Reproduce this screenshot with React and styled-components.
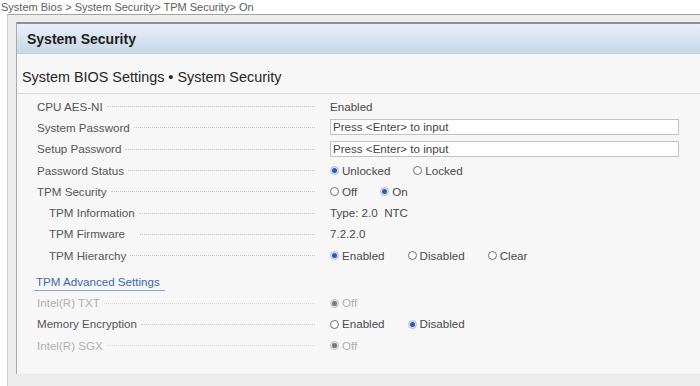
import React from 'react'
import styled, { createGlobalStyle } from 'styled-components'

const Global = createGlobalStyle`
  html, body {
    margin: 0;
    padding: 0;
    background: #fff;
    overflow: hidden;
  }
  body {
    font-family: "Liberation Sans", Arial, sans-serif;
  }
`

const Breadcrumb = styled.div`
  height: 14px;
  line-height: 14px;
  font-size: 11px;
  color: #5e5e5e;
  padding-left: 1px;
`

const Frame = styled.div`
  margin-left: 7px;
  border-top: 1px solid #a4a4a4;
  border-left: 1px solid #cfcfcf;
  background: #ececec;
  padding: 7px 0 13px 8px;
`

const Panel = styled.div`
  border-top: 2px solid #8e8e8e;
  border-left: 1px solid #a9a9a9;
  background: #f7f7f7;
  padding-bottom: 18px;
`

const Header = styled.div`
  height: 30px;
  line-height: 30px;
  padding-left: 10px;
  font-size: 14px;
  font-weight: bold;
  color: #1e1e1e;
  background: linear-gradient(#e9eff8, #c8d7e8);
  border-bottom: 1px solid #c2d0e0;
  box-sizing: border-box;
`

const Title = styled.div`
  padding: 14px 0 7px 5px;
  line-height: 18px;
  font-size: 14.4px;
  color: #262626;
  border-bottom: 1px solid #dcdcdc;
`

const Content = styled.div`
  padding-top: 1.5px;
`

const Row = styled.div`
  display: flex;
  align-items: center;
  height: 21.3px;
  font-size: 11.6px;
`

const LabelCell = styled.div`
  width: 293px;
  margin-left: 20px;
  padding-left: ${p => (p.$indent ? 12 : 0)}px;
  padding-right: 15px;
  box-sizing: border-box;
  display: flex;
  align-items: center;
  color: ${p => (p.$disabled ? '#b0b0b0' : '#555')};
`

const Label = styled.span`
  white-space: nowrap;
`

const Leader = styled.span`
  flex: 1;
  margin-left: ${p => (p.$gap ? 15 : 4)}px;
  border-bottom: 1px dotted ${p => (p.$disabled ? '#dcdcdc' : '#c8c8c8')};
  height: 0;
  margin-top: 1px;
`

const Value = styled.div`
  display: flex;
  align-items: center;
  gap: 23px;
  color: #4a4a4a;
  flex: 1;
  padding-right: 21px;
`

const TextBox = styled.div`
  flex: 1;
  height: 16px;
  line-height: 14px;
  border: 1px solid #c2c2c2;
  background: #fff;
  box-sizing: border-box;
  padding-left: 2px;
  color: #444;
`

const Option = styled.span`
  display: inline-flex;
  align-items: center;
  gap: 3px;
  color: ${p => (p.$disabled ? '#b0b0b0' : '#4a4a4a')};
`

const Dot = styled.span`
  position: relative;
  width: 9px;
  height: 9px;
  border-radius: 50%;
  box-sizing: border-box;
  margin-top: 1px;
  border: 1px solid ${p => (p.$checked ? (p.$disabled ? '#c4c4c4' : '#b3c0e2') : '#6e6e6e')};
  background: ${p => (p.$checked ? (p.$disabled ? '#dcdcdc' : '#dbe2f4') : '#fff')};
  &::after {
    content: '';
    display: ${p => (p.$checked ? 'block' : 'none')};
    position: absolute;
    left: 1px;
    top: 1px;
    width: 5px;
    height: 5px;
    border-radius: 50%;
    background: ${p => (p.$disabled ? '#7c7c7c' : '#3157bf')};
  }
`

const SubLink = styled.div`
  margin: 8px 0 1px 17px;
  display: inline-block;
  padding: 0 5px 0 2px;
  line-height: 16px;
  font-size: 11.6px;
  color: #3a69b5;
  border-bottom: 1px solid #8aa6d4;
`

const Radio = ({ label, checked, disabled }) => (
  <Option $disabled={disabled}>
    <Dot $checked={checked} $disabled={disabled} />
    {label}
  </Option>
)

const Setting = ({ label, indent, disabled, gap, children }) => (
  <Row>
    <LabelCell $indent={indent} $disabled={disabled}>
      <Label>{label}</Label>
      <Leader $gap={gap} $disabled={disabled} />
    </LabelCell>
    <Value>{children}</Value>
  </Row>
)

export default function App() {
  return (
    <>
      <Global />
      <Breadcrumb>System Bios &gt; System Security&gt; TPM Security&gt; On</Breadcrumb>
      <Frame>
        <Panel>
          <Header>System Security</Header>
          <Title>System BIOS Settings • System Security</Title>
          <Content>
            <Setting label="CPU AES-NI">Enabled</Setting>
            <Setting label="System Password">
              <TextBox>Press &lt;Enter&gt; to input</TextBox>
            </Setting>
            <Setting label="Setup Password">
              <TextBox>Press &lt;Enter&gt; to input</TextBox>
            </Setting>
            <Setting label="Password Status">
              <Radio label="Unlocked" checked />
              <Radio label="Locked" />
            </Setting>
            <Setting label="TPM Security">
              <Radio label="Off" />
              <Radio label="On" checked />
            </Setting>
            <Setting label="TPM Information" indent>Type: 2.0&nbsp; NTC</Setting>
            <Setting label="TPM Firmware" indent gap>7.2.2.0</Setting>
            <Setting label="TPM Hierarchy" indent>
              <Radio label="Enabled" checked />
              <Radio label="Disabled" />
              <Radio label="Clear" />
            </Setting>
            <SubLink>TPM Advanced Settings</SubLink>
            <Setting label="Intel(R) TXT" disabled>
              <Radio label="Off" checked disabled />
            </Setting>
            <Setting label="Memory Encryption">
              <Radio label="Enabled" />
              <Radio label="Disabled" checked />
            </Setting>
            <Setting label="Intel(R) SGX" disabled>
              <Radio label="Off" checked disabled />
            </Setting>
          </Content>
        </Panel>
      </Frame>
    </>
  )
}
